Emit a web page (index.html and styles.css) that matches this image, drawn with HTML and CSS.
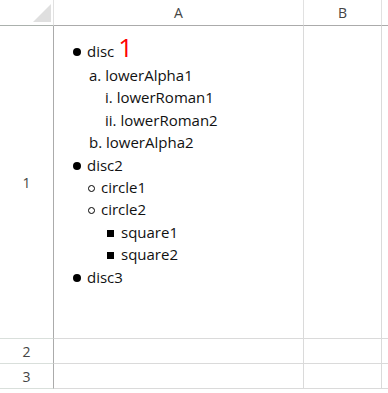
FILE: index.html
```html
<!DOCTYPE html>
<html>
<head>
    <title>Sheet</title>
    <meta name="viewport" content="width=device-width, initial-scale=1.0">
    <link rel="stylesheet" href="styles.css">
</head>
<body>
    <div class="sheet">
        <!-- header row -->
        <div class="corner"><span class="corner-tri"></span></div>
        <div class="col-head">A</div>
        <div class="col-head">B</div>
        <div class="col-head tail"></div>

        <!-- row 1 -->
        <div class="row-head">1</div>
        <div class="cell">
            <ul class="disc">
                <li>disc <span class="big">1</span>
                    <ol class="alpha">
                        <li>lowerAlpha1
                            <ol class="roman">
                                <li>lowerRoman1</li>
                                <li>lowerRoman2</li>
                            </ol>
                        </li>
                        <li>lowerAlpha2</li>
                    </ol>
                </li>
                <li>disc2
                    <ul class="circle">
                        <li>circle1</li>
                        <li>circle2
                            <ul class="square">
                                <li>square1</li>
                                <li>square2</li>
                            </ul>
                        </li>
                    </ul>
                </li>
                <li>disc3</li>
            </ul>
        </div>
        <div class="cell"></div>
        <div class="cell tail"></div>

        <!-- row 2 -->
        <div class="row-head">2</div>
        <div class="cell"></div>
        <div class="cell"></div>
        <div class="cell tail"></div>

        <!-- row 3 -->
        <div class="row-head">3</div>
        <div class="cell"></div>
        <div class="cell"></div>
        <div class="cell tail"></div>
    </div>
</body>
</html>
```

FILE: styles.css
```css
body {
    margin: 0;
    background-color: #fff;
    font-family: 'Open Sans', 'Noto Sans', sans-serif;
    overflow: hidden;
}

.sheet {
    display: grid;
    grid-template-columns: 54px 250px 78px 1fr;
    grid-template-rows: 26px 313px 25px 25px;
}

.corner,
.col-head,
.row-head,
.cell {
    box-sizing: border-box;
    border-right: 1px solid #d4d4d4;
    border-bottom: 1px solid #d4d4d4;
}

.corner {
    position: relative;
    border-right-color: #e1e1e1;
    border-bottom-color: #abb1ad;
}

.corner-tri {
    position: absolute;
    right: 2px;
    bottom: 3px;
    width: 0;
    height: 0;
    border-left: 18px solid transparent;
    border-bottom: 18px solid #dfdfdf;
}

.col-head {
    display: flex;
    align-items: center;
    justify-content: center;
    font-size: 14px;
    color: #444;
    border-right-color: #e1e1e1;
    border-bottom-color: #ababab;
}

.row-head {
    display: flex;
    align-items: center;
    justify-content: center;
    font-size: 14px;
    color: #444;
    border-right-color: #ababab;
    border-bottom-color: #d9dfdb;
}

.cell {
    border-right-color: #dadada;
    border-bottom-color: #dadada;
}

.tail {
    border-right: none;
}

/* lists inside cell A1 */
.cell ul,
.cell ol {
    margin: 0;
    padding: 0;
    list-style-position: inside;
}

.cell li {
    font-size: 15px;
    line-height: 22.4px;
    color: #111;
}

.cell ul {
    list-style: none;
}

.disc {
    padding: 12px 0 0 19px !important;
}

.disc > li:first-child {
    line-height: 26px;
}

.disc > li::before,
.circle > li::before,
.square > li::before {
    content: "";
    display: inline-block;
    width: 8px;
    height: 8px;
    margin-right: 6px;
    vertical-align: 1px;
    box-sizing: border-box;
    background-color: #000;
    border-radius: 50%;
}

.circle > li::before {
    width: 7px;
    height: 7px;
    background-color: transparent;
    border: 1px solid #000;
}

.square > li::before {
    width: 7px;
    height: 7px;
    border-radius: 0;
    margin-right: 7px;
}

.alpha {
    list-style-type: lower-alpha;
    padding-left: 16px !important;
}

.roman {
    list-style-type: lower-roman;
    padding-left: 16px !important;
}

.circle {
    padding-left: 15px !important;
}

.square {
    padding-left: 19px !important;
}

.big {
    color: #f00;
    font-size: 26px;
    line-height: 10px;
}
```
